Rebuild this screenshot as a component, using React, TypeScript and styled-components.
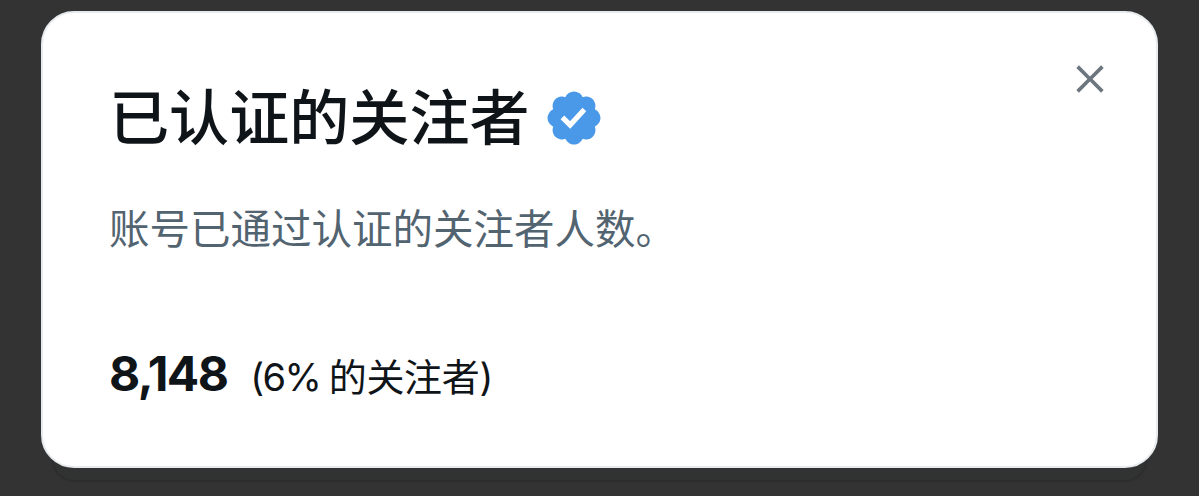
import styled, { createGlobalStyle } from "styled-components";

const GlobalStyle = createGlobalStyle`
  * {
    box-sizing: border-box;
  }
  body {
    margin: 0;
    background: #333333;
    font-family: Inter, "Noto Sans CJK SC", sans-serif;
  }
`;

const Backdrop = styled.main`
  height: 496px;
  padding: 11px 41px 28px;
  overflow: hidden;
`;

const Card = styled.section`
  display: flex;
  justify-content: space-between;
  align-items: flex-start;
  height: 457px;
  padding: 66px 44px 0 66px;
  border: 2px solid #e7ebee;
  border-radius: 33px;
  background: #ffffff;
  box-shadow:
    0 24px 0 -12px #313232,
    0 25px 1px -11px #2d2d2e;
`;

const Heading = styled.div`
  display: flex;
  align-items: flex-start;
  gap: 13px;
  height: 80px;
`;

const Title = styled.h1`
  margin: 0;
  font-family: "Noto Sans CJK SC", sans-serif;
  font-size: 60.1px;
  font-weight: 500;
  line-height: 70px;
  color: #0f1419;
`;

const Badge = styled.svg`
  width: 62px;
  height: 62px;
  margin-top: 8px;
  fill: #4a99e9;
`;

const Description = styled.p`
  margin: 41px 0 0;
  font-family: "Noto Sans CJK SC", sans-serif;
  font-size: 40.5px;
  font-weight: 400;
  line-height: 54px;
  color: #536471;
`;

const Stats = styled.div`
  display: flex;
  align-items: baseline;
  gap: 23px;
  margin-top: 90px;
  line-height: 60px;
  color: #0f1419;
`;

const Count = styled.strong`
  font-size: 48px;
  font-weight: 700;
  letter-spacing: -1.6px;
`;

const Share = styled.span`
  font-size: 38px;
  font-weight: 400;
  letter-spacing: -0.3px;
  word-spacing: -2px;
`;

const Percent = styled.span`
  letter-spacing: -1.6px;
`;

const CloseButton = styled.button`
  display: flex;
  margin: -22px 0 0;
  padding: 0;
  border: 0;
  background: none;
`;

const CloseIcon = styled.svg`
  width: 44px;
  height: 44px;
  fill: #6d767e;
`;

const App = () => {
  return (
    <>
      <GlobalStyle />
      <Backdrop>
        <Card>
          <div>
            <Heading>
              <Title>已认证的关注者</Title>
              <Badge viewBox="0 0 22 22">
                <path d="M20.396 11c-.018-.646-.215-1.275-.57-1.816-.354-.54-.852-.972-1.438-1.246.223-.607.27-1.264.14-1.897-.131-.634-.437-1.218-.882-1.687-.47-.445-1.053-.75-1.687-.882-.633-.13-1.29-.083-1.897.14-.273-.587-.704-1.086-1.245-1.44S11.647 1.62 11 1.604c-.646.017-1.273.213-1.813.568s-.969.854-1.24 1.44c-.608-.223-1.267-.272-1.902-.14-.635.13-1.22.436-1.69.882-.445.47-.749 1.055-.878 1.688-.13.633-.08 1.29.144 1.896-.587.274-1.087.705-1.443 1.245-.356.54-.555 1.17-.574 1.817.02.647.218 1.276.574 1.817.356.54.856.972 1.443 1.245-.224.606-.274 1.263-.144 1.896.13.634.433 1.218.877 1.688.47.443 1.054.747 1.687.878.633.132 1.29.084 1.897-.136.274.586.705 1.084 1.246 1.439.54.354 1.17.551 1.816.569.647-.016 1.276-.213 1.817-.567s.972-.854 1.245-1.44c.604.239 1.266.296 1.903.164.636-.132 1.22-.447 1.68-.907.46-.46.776-1.044.908-1.681s.075-1.299-.165-1.903c.586-.274 1.084-.705 1.439-1.246.354-.54.551-1.17.569-1.816zM9.662 14.85l-3.429-3.428 1.293-1.302 2.072 2.072 4.4-4.794 1.347 1.246z" />
              </Badge>
            </Heading>
            <Description>账号已通过认证的关注者人数。</Description>
            <Stats>
              <Count>8,148</Count>
              <Share>
                <Percent>(6%</Percent> 的关注者)
              </Share>
            </Stats>
          </div>
          <CloseButton aria-label="关闭">
            <CloseIcon viewBox="0 0 24 24">
              <path d="M10.59 12L4.54 5.96l1.42-1.42L12 10.59l6.04-6.05 1.42 1.42L13.41 12l6.05 6.04-1.42 1.42L12 13.41l-6.04 6.05-1.42-1.42L10.59 12z" />
            </CloseIcon>
          </CloseButton>
        </Card>
      </Backdrop>
    </>
  );
};

export default App;
